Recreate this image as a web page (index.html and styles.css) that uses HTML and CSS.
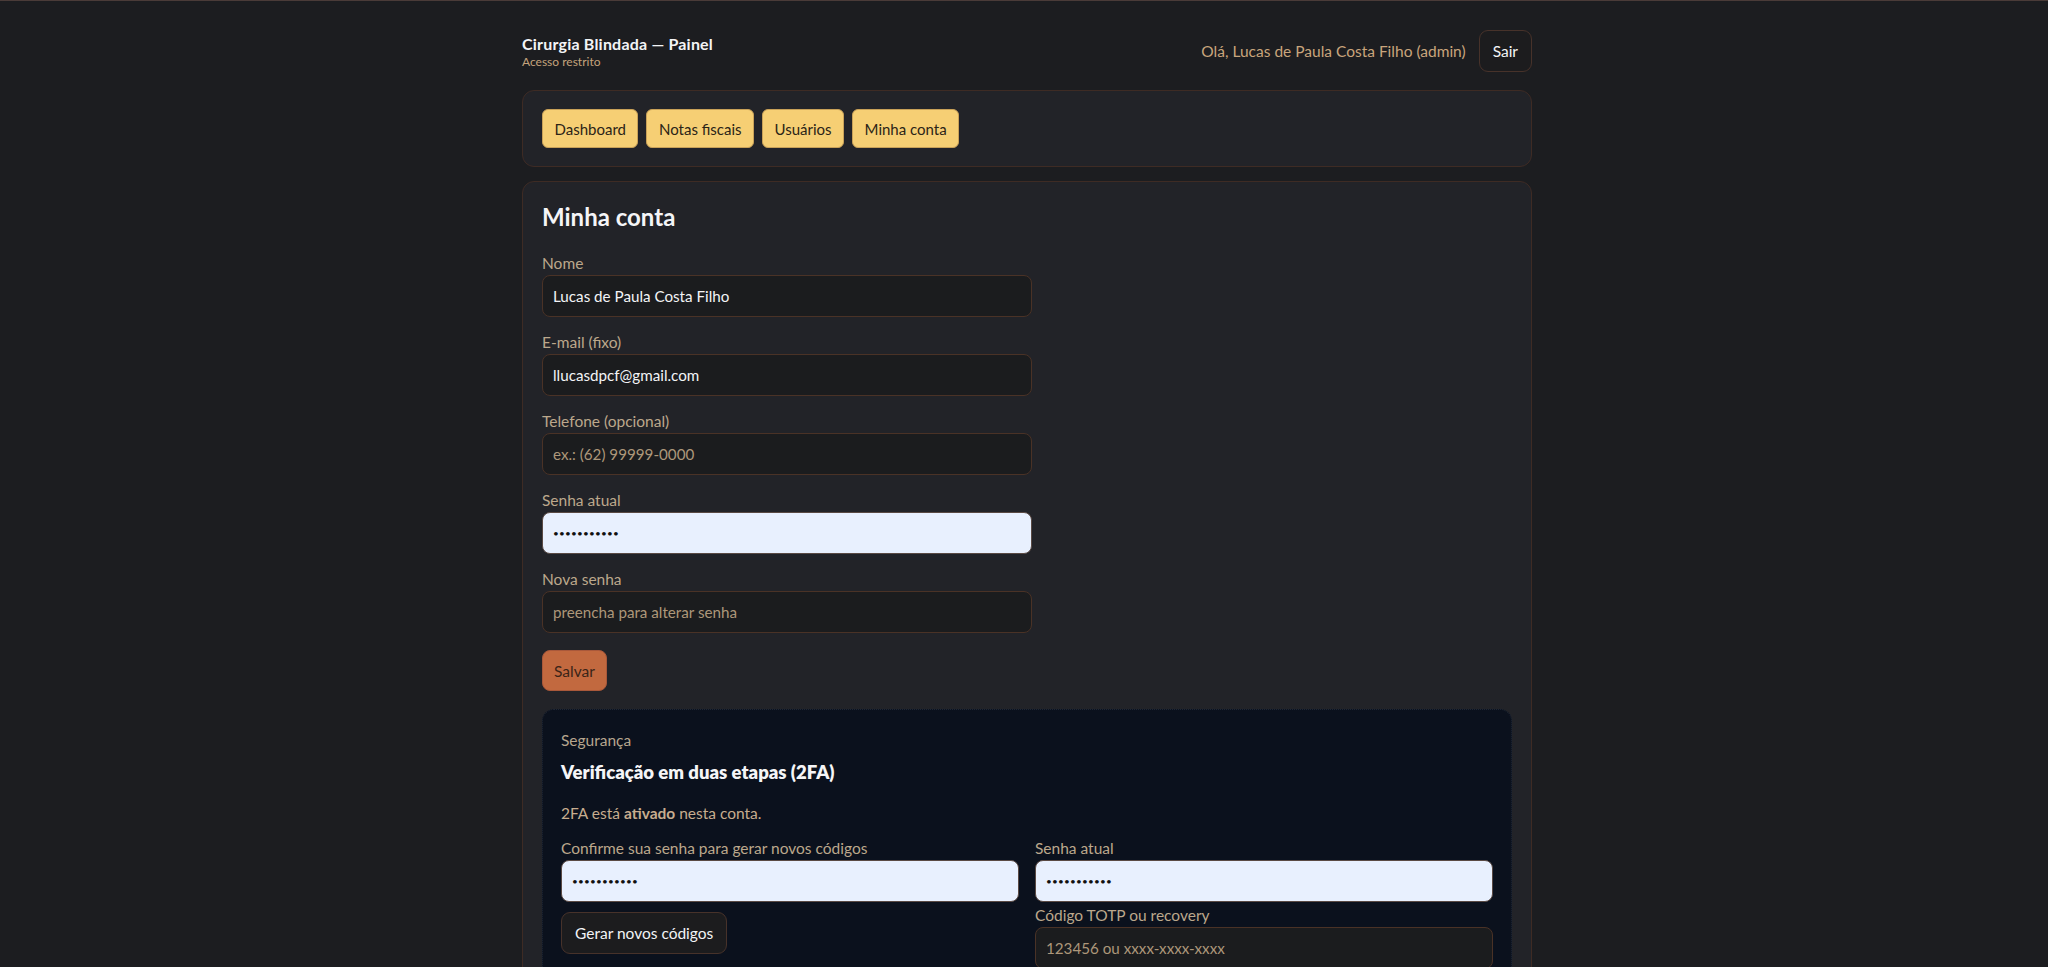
FILE: index.html
```html
<!DOCTYPE html>
<html lang="pt-BR">
<head>
  <meta charset="UTF-8" />
  <meta name="viewport" content="width=device-width, initial-scale=1.0" />
  <title>Cirurgia Blindada — Painel</title>
  <link rel="stylesheet" href="styles.css">
</head>
<body>
  <div class="wrap">
    <header class="topbar">
      <div class="brand">
        <div class="brand-title">Cirurgia Blindada — Painel</div>
        <div class="brand-sub">Acesso restrito</div>
      </div>
      <div class="user">
        <span class="hello">Olá, Lucas de Paula Costa Filho (admin)</span>
        <button class="btn-ghost">Sair</button>
      </div>
    </header>

    <nav class="card nav">
      <button class="tab">Dashboard</button>
      <button class="tab">Notas fiscais</button>
      <button class="tab">Usuários</button>
      <button class="tab">Minha conta</button>
    </nav>

    <main class="card">
      <h2>Minha conta</h2>
      <form class="account">
        <div class="field">
          <label for="nome">Nome</label>
          <input type="text" id="nome" value="Lucas de Paula Costa Filho" />
        </div>
        <div class="field">
          <label for="email">E-mail (fixo)</label>
          <input type="text" id="email" value="llucasdpcf@gmail.com" readonly />
        </div>
        <div class="field">
          <label for="tel">Telefone (opcional)</label>
          <input type="text" id="tel" placeholder="ex.: (62) 99999-0000" />
        </div>
        <div class="field">
          <label for="senha">Senha atual</label>
          <input type="password" id="senha" class="filled" value="12345678901" />
        </div>
        <div class="field">
          <label for="nova">Nova senha</label>
          <input type="password" id="nova" placeholder="preencha para alterar senha" />
        </div>
        <button type="button" class="btn-save">Salvar</button>
      </form>

      <section class="security">
        <div class="kicker">Segurança</div>
        <h3>Verificação em duas etapas (2FA)</h3>
        <p class="status">2FA está <strong>ativado</strong> nesta conta.</p>
        <div class="sec-grid">
          <div>
            <label for="conf">Confirme sua senha para gerar novos códigos</label>
            <input type="password" id="conf" class="filled" value="12345678901" />
            <button type="button" class="btn-ghost btn-codes">Gerar novos códigos</button>
          </div>
          <div>
            <label for="senha2">Senha atual</label>
            <input type="password" id="senha2" class="filled" value="12345678901" />
            <label for="totp" class="next">Código TOTP ou recovery</label>
            <input type="text" id="totp" placeholder="123456 ou xxxx-xxxx-xxxx" />
          </div>
        </div>
      </section>
    </main>
  </div>
</body>
</html>
```

FILE: styles.css
```css
body {
  margin: 0;
  padding: 0 0 40px 6px;
  background: #1c1d20;
  border-top: 1px solid #4a3b38;
  font-family: Lato, "Segoe UI", sans-serif;
  font-size: 15.5px;
  color: #f1f1f1;
}
.wrap {
  width: 1010px;
  margin: 0 auto;
}
.topbar {
  display: flex;
  justify-content: space-between;
  align-items: center;
  padding-top: 29px;
}
.brand-title {
  font-weight: bold;
  font-size: 16px;
  line-height: 20px;
  letter-spacing: 0.2px;
  color: #f3f4f6;
}
.brand-sub {
  font-size: 12px;
  line-height: 15px;
  color: #c4a37c;
}
.user {
  display: flex;
  align-items: center;
  gap: 13px;
}
.hello {
  color: #c9a57c;
}
button {
  font-family: inherit;
  font-size: 15.5px;
  cursor: pointer;
}
.btn-ghost {
  height: 42px;
  padding: 0 13px;
  background: #1c1c1e;
  color: #f3f4f6;
  border: 1px solid #47322a;
  border-radius: 9px;
}
.card {
  background: #222328;
  border: 1px solid #3e2b24;
  border-radius: 12px;
  padding: 19px 19px;
}
.nav {
  display: flex;
  gap: 8px;
  margin-top: 18px;
  padding: 18px 19px;
}
.tab {
  height: 39px;
  padding: 0 11.5px;
  background: #f6cf74;
  color: #2b2417;
  border: 1px solid #c9a158;
  border-radius: 6px;
  font-size: 15px;
}
main.card {
  margin-top: 14px;
  padding-top: 20px;
}
h2 {
  margin: 0 0 21px;
  font-size: 24px;
  line-height: 30px;
  color: #f5f5f7;
}
label {
  display: block;
  line-height: 20px;
  margin-bottom: 2px;
  color: #bca88c;
}
input {
  box-sizing: border-box;
  display: block;
  width: 100%;
  height: 42px;
  padding: 0 10px;
  background: #1b1c1e;
  color: #f3f4f6;
  border: 1px solid #4a3226;
  border-radius: 8px;
  font-family: inherit;
  font-size: 15.2px;
  outline: none;
}
input::placeholder {
  color: #ad977a;
}
input.filled {
  background: #e8f0fe;
  color: #111;
  border-color: #5a4a44;
  font-size: 10px;
  letter-spacing: 0.2px;
}
.account {
  width: 490px;
}
.field {
  margin-bottom: 15px;
}
.btn-save {
  margin-top: 2px;
  height: 41px;
  padding: 0 11px;
  background: #c2693f;
  color: #3a2418;
  border: 1px solid #a9583a;
  border-radius: 8px;
}
.security {
  margin-top: 18px;
  padding: 20px 18px 18px;
  background: #0b111d;
  border: 1px dotted #1f2736;
  border-radius: 12px;
}
.kicker {
  line-height: 20px;
  color: #b7a68e;
}
h3 {
  margin: 10px 0 0;
  font-size: 18.5px;
  line-height: 24px;
  font-weight: 800;
  color: #f5f5f7;
}
.status {
  margin: 19px 0 0;
  line-height: 20px;
  color: #c7ad8f;
}
.sec-grid {
  display: grid;
  grid-template-columns: 1fr 1fr;
  gap: 16px;
  margin-top: 15px;
}
.btn-codes {
  margin-top: 10px;
}
label.next {
  margin-top: 3px;
}
```
